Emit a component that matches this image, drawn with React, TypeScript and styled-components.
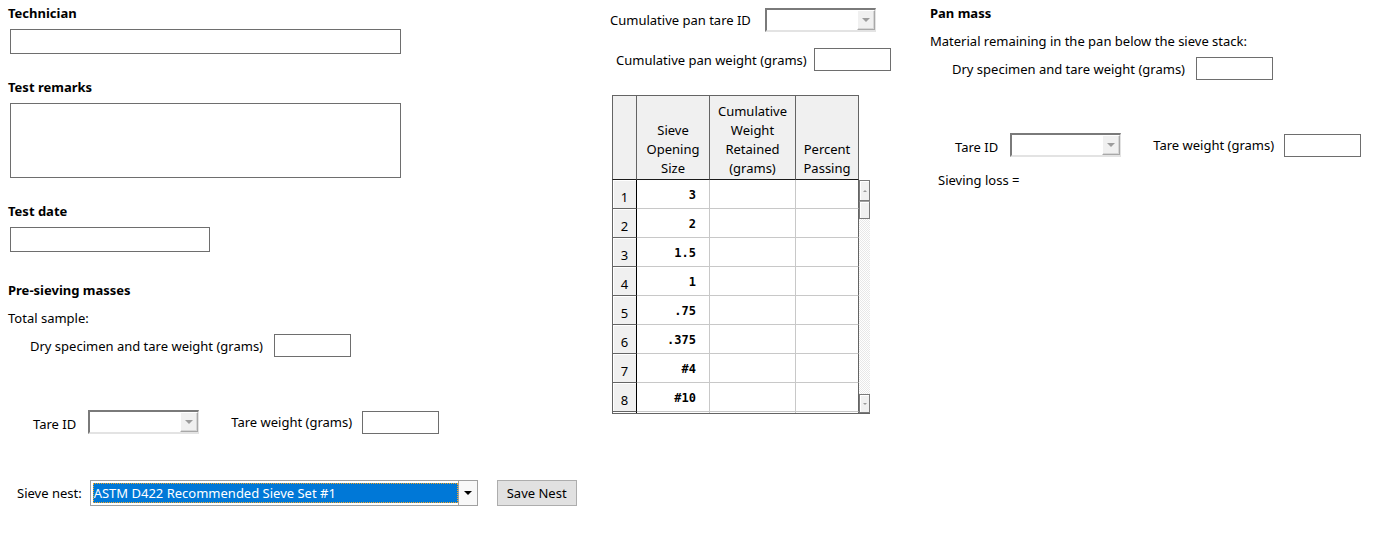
import * as React from 'react'
import styled, { createGlobalStyle } from 'styled-components'

const GlobalStyle = createGlobalStyle`
  body {
    margin: 0;
    background: #fff;
    color: #000;
    font-family: 'Noto Sans', 'Open Sans', sans-serif;
    font-size: 13px;
  }
`

const Page = styled.div`
  display: grid;
  grid-template-columns: 602px 320px 1fr;
  padding-left: 8px;
  width: 1383px;
  height: 539px;
  box-sizing: border-box;
`

const Column = styled.div`
  display: flex;
  flex-direction: column;
  align-items: flex-start;
`

const Heading = styled.div<{ $top: number }>`
  margin-top: ${(p) => p.$top}px;
  font-weight: 700;
  line-height: 16px;
  white-space: nowrap;
`

const Label = styled.div<{ $top?: number; $left?: number }>`
  margin-top: ${(p) => p.$top || 0}px;
  padding-left: ${(p) => p.$left || 0}px;
  line-height: 16px;
  white-space: nowrap;
`

const Row = styled.div<{ $top: number; $left: number; $gap: number }>`
  display: flex;
  align-items: center;
  margin-top: ${(p) => p.$top}px;
  padding-left: ${(p) => p.$left}px;
  gap: ${(p) => p.$gap}px;
  white-space: nowrap;
`

const Text = styled.span<{ $drop?: number; $before?: number; $after?: number }>`
  position: relative;
  top: ${(p) => p.$drop || 0}px;
  margin-left: ${(p) => p.$before || 0}px;
  margin-right: ${(p) => p.$after || 0}px;
  line-height: 16px;
`

const TextBox = styled.input<{ $w: number; $h: number; $top?: number; $left?: number }>`
  box-sizing: border-box;
  width: ${(p) => p.$w}px;
  height: ${(p) => p.$h}px;
  margin: ${(p) => p.$top || 0}px 0 0 ${(p) => p.$left || 0}px;
  border: 1px solid #6e6e6e;
  padding: 0 3px;
  background: #fff;
  font: inherit;
  outline: none;
`

const TextArea = styled.textarea<{ $w: number; $h: number; $top: number; $left: number }>`
  box-sizing: border-box;
  width: ${(p) => p.$w}px;
  height: ${(p) => p.$h}px;
  margin: ${(p) => p.$top}px 0 0 ${(p) => p.$left}px;
  border: 1px solid #6e6e6e;
  resize: none;
  font: inherit;
  outline: none;
`

const Combo = styled.div<{ $w: number }>`
  box-sizing: border-box;
  display: flex;
  justify-content: flex-end;
  width: ${(p) => p.$w}px;
  height: 24px;
  border-top: 2px solid #7a7a7a;
  border-left: 2px solid #7a7a7a;
  border-right: 1px solid #e3e3e3;
  border-bottom: 2px solid #e3e3e3;
  background: #fff;
`

const ComboButton = styled.div`
  box-sizing: border-box;
  width: 18px;
  height: 100%;
  background: #f0f0f0;
  border: 1px solid #a8a8a8;
  border-top-color: #fff;
  border-left-color: #fff;
  box-shadow: inset -1px -1px 0 #d6d6d6;
  display: flex;
  align-items: center;
  justify-content: center;
`

const Triangle = styled.div<{ $color: string }>`
  width: 0;
  height: 0;
  border-left: 4px solid transparent;
  border-right: 4px solid transparent;
  border-top: 4px solid ${(p) => p.$color};
`

const NestSelect = styled.div`
  box-sizing: border-box;
  display: flex;
  width: 388px;
  height: 26px;
  border: 1px solid #a0a0a0;
  padding: 2px 0 2px 2px;
  background: #fff;
`

const NestValue = styled.div`
  flex: 1;
  background: #0078d7;
  color: #fff;
  outline: 1px dotted #f5a623;
  outline-offset: -1px;
  line-height: 20px;
  padding-left: 1px;
  white-space: nowrap;
`

const NestButton = styled.div`
  box-sizing: border-box;
  width: 19px;
  margin: -2px 0;
  border-left: 1px solid #a0a0a0;
  background: #f8f8f8;
  display: flex;
  align-items: center;
  justify-content: center;
`

const Button = styled.button`
  box-sizing: border-box;
  width: 80px;
  height: 26px;
  margin-left: 11px;
  background: #e1e1e1;
  border: 1px solid #adadad;
  font: inherit;
  color: #000;
  padding: 0;
`

/* sieve grid */

const cols = '25px 73px 86px 63px'

const Grid = styled.div`
  box-sizing: border-box;
  margin: 24px 0 0 2px;
  width: 258px;
  height: 319px;
  display: flex;
  flex-direction: column;
  overflow: hidden;
  border-bottom: 1px solid #646464;
`

const HeaderRow = styled.div`
  display: grid;
  grid-template-columns: ${cols};
  width: 247px;
  height: 85px;
  flex-shrink: 0;
`

const HeaderCell = styled.div<{ $first?: boolean }>`
  box-sizing: border-box;
  background: #f0f0f0;
  border-top: 1px solid #646464;
  border-right: 1px solid #646464;
  border-left: ${(p) => (p.$first ? '1px solid #646464' : 'none')};
  border-bottom: 1px solid #1a1a1a;
  display: flex;
  align-items: flex-end;
  justify-content: center;
  text-align: center;
  line-height: 19px;
  padding-bottom: 1px;
`

const Body = styled.div`
  display: flex;
  flex: 1;
  overflow: hidden;
`

const Rows = styled.div`
  display: grid;
  grid-template-columns: ${cols};
  grid-auto-rows: 29px;
  width: 247px;
  align-content: start;
`

const RowHead = styled.div`
  box-sizing: border-box;
  background: #f0f0f0;
  border-left: 1px solid #646464;
  border-right: 1px solid #000;
  border-bottom: 1px solid #646464;
  box-shadow: inset 1px 1px 0 #fff;
  text-align: center;
  padding-top: 7px;
  line-height: 20px;
`

const Cell = styled.div<{ $last?: boolean }>`
  box-sizing: border-box;
  border-bottom: 1px solid #c8c8c8;
  border-right: 1px solid ${(p) => (p.$last ? '#646464' : '#c8c8c8')};
`

const SizeCell = styled(Cell)`
  font-family: 'DejaVu Sans Mono', 'Liberation Mono', monospace;
  font-weight: 700;
  font-size: 12px;
  text-align: right;
  padding: 2px 13px 0 0;
  line-height: 27px;
`

const Scrollbar = styled.div`
  width: 11px;
  display: flex;
  flex-direction: column;
  background: repeating-conic-gradient(#e8e8e8 0 25%, #fff 0 50%) 0 0 / 2px 2px;
`

const ScrollBtn = styled.div<{ $h: number; $down?: boolean }>`
  box-sizing: border-box;
  height: ${(p) => p.$h}px;
  background: #f0f0f0;
  border: 1px solid #7a7a7a;
  border-top-color: ${(p) => (p.$down ? '#a0a0a0' : '#7a7a7a')};
  box-shadow: inset 1px 1px 0 #fff;
  display: flex;
  align-items: center;
  justify-content: center;
`

const Spacer = styled.div`
  flex: 1;
`

const TinyArrow = styled.div<{ $up?: boolean }>`
  width: 0;
  height: 0;
  border-left: 2px solid transparent;
  border-right: 2px solid transparent;
  ${(p) => (p.$up ? 'border-bottom: 2px solid #9a9a9a;' : 'border-top: 2px solid #9a9a9a;')}
`

const sizes = ['3', '2', '1.5', '1', '.75', '.375', '#4', '#10', '']

const TareRow = ({ top, left }: { top: number; left: number }) => (
  <Row $top={top} $left={left} $gap={0}>
    <Text $drop={2} $after={12}>Tare ID</Text>
    <Combo $w={111}>
      <ComboButton>
        <Triangle $color='#9c9c9c' />
      </ComboButton>
    </Combo>
    <Text $before={32} $after={10}>Tare weight (grams)</Text>
    <TextBox $w={77} $h={23} />
  </Row>
)

const SieveGrid = () => (
  <Grid>
    <HeaderRow>
      <HeaderCell $first />
      <HeaderCell>Sieve<br />Opening<br />Size</HeaderCell>
      <HeaderCell>Cumulative<br />Weight<br />Retained<br />(grams)</HeaderCell>
      <HeaderCell>Percent<br />Passing</HeaderCell>
    </HeaderRow>
    <Body>
      <Rows>
        {sizes.map((s, i) => (
          <React.Fragment key={i}>
            <RowHead>{s ? i + 1 : ''}</RowHead>
            <SizeCell>{s}</SizeCell>
            <Cell />
            <Cell $last />
          </React.Fragment>
        ))}
      </Rows>
      <Scrollbar>
        <ScrollBtn $h={21}>
          <TinyArrow $up />
        </ScrollBtn>
        <ScrollBtn $h={18} $down />
        <Spacer />
        <ScrollBtn $h={19}>
          <TinyArrow />
        </ScrollBtn>
      </Scrollbar>
    </Body>
  </Grid>
)

const App = () => {
  return (
    <Page>
      <GlobalStyle />
      <Column>
        <Heading $top={5}>Technician</Heading>
        <TextBox $w={391} $h={25} $top={8} $left={2} />
        <Heading $top={25}>Test remarks</Heading>
        <TextArea $w={391} $h={75} $top={8} $left={2} />
        <Heading $top={25}>Test date</Heading>
        <TextBox $w={200} $h={25} $top={8} $left={2} />
        <Heading $top={30}>Pre-sieving masses</Heading>
        <Label $top={12}>Total sample:</Label>
        <Row $top={8} $left={22} $gap={11}>
          <Text>Dry specimen and tare weight (grams)</Text>
          <TextBox $w={77} $h={23} />
        </Row>
        <TareRow top={53} left={25} />
        <Row $top={46} $left={9} $gap={8}>
          <Text>Sieve nest:</Text>
          <NestSelect>
            <NestValue>ASTM D422 Recommended Sieve Set #1</NestValue>
            <NestButton>
              <Triangle $color='#000' />
            </NestButton>
          </NestSelect>
          <Button>Save Nest</Button>
        </Row>
      </Column>

      <Column>
        <Row $top={8} $left={0} $gap={14}>
          <Text>Cumulative pan tare ID</Text>
          <Combo $w={111}>
            <ComboButton>
              <Triangle $color='#9c9c9c' />
            </ComboButton>
          </Combo>
        </Row>
        <Row $top={16} $left={6} $gap={7}>
          <Text>Cumulative pan weight (grams)</Text>
          <TextBox $w={77} $h={23} />
        </Row>
        <SieveGrid />
      </Column>

      <Column>
        <Heading $top={5}>Pan mass</Heading>
        <Label $top={12}>Material remaining in the pan below the sieve stack:</Label>
        <Row $top={8} $left={22} $gap={11}>
          <Text>Dry specimen and tare weight (grams)</Text>
          <TextBox $w={77} $h={23} />
        </Row>
        <TareRow top={53} left={25} />
        <Label $top={15} $left={8}>Sieving loss =</Label>
      </Column>
    </Page>
  )
}

export default App
